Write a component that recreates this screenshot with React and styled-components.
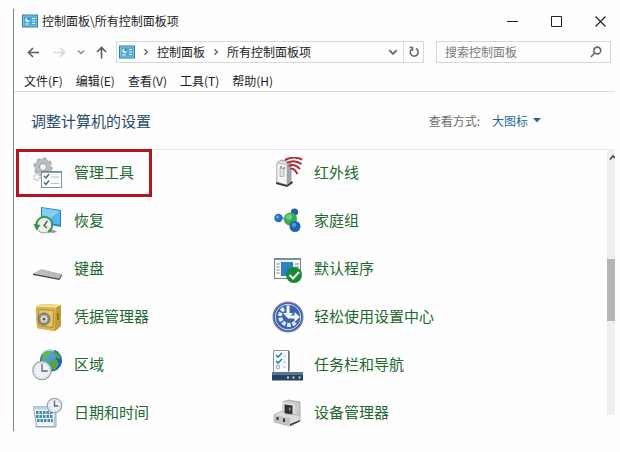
import styled, { createGlobalStyle } from 'styled-components'

const GlobalStyle = createGlobalStyle`
  * {
    box-sizing: border-box;
  }

  body {
    margin: 0;
    background-color: #fefefe;
    color: #1c1c1c;
    font-family: "Noto Sans CJK SC", "Open Sans", sans-serif;
    font-size: 12px;
    line-height: 16px;
  }

  button, input, select {
    font: inherit;
    color: inherit;
    border: none;
    background: none;
    padding: 0;
    margin: 0;
  }

  a {
    color: inherit;
    text-decoration: none;
  }

  svg {
    display: block;
    flex: none;
  }
`

const PageStyled = styled.div`
  display: flex;
  height: 100vh;
  padding: 9px 5px 21px 13px;
`

const WindowStyled = styled.div`
  flex: 1;
  min-width: 0;
  display: flex;
  flex-direction: column;
  border-left: 1px solid #6f8c96;
`

const TitleBar = styled.header`
  flex: none;
  display: flex;
  align-items: center;
  gap: 4px;
  height: 24px;
  padding-left: 8px;

  h1 {
    flex: 1;
    margin: 0;
    font-size: 12px;
    font-weight: 400;
  }
`

const WindowButtons = styled.div`
  display: flex;
  gap: 14px;
`

const IconButton = styled.button`
  display: flex;
  align-items: center;
  justify-content: center;
  width: ${(props) => props.$width}px;
  height: 20px;
`

const Toolbar = styled.div`
  flex: none;
  display: flex;
  align-items: center;
  height: 38px;
  padding: 0 4px 0 8px;
`

const History = styled.div`
  display: flex;
  width: 94px;
  justify-content: space-between;
  padding-right: 4px;
`

const AddressBar = styled.nav`
  flex: 304 1 0;
  min-width: 0;
  display: flex;
  align-items: center;
  height: 22px;
  border: 1px solid #d6d9db;
  padding-left: 2px;

  a {
    white-space: nowrap;
  }

  .separator {
    margin: 0 7px;
  }

  .refresh {
    border-left: 1px solid #dcdcdc;
  }
`

const Spacer = styled.div`
  flex: 1;
`

const SearchBox = styled.form`
  flex: 161 1 0;
  min-width: 0;
  display: flex;
  align-items: center;
  height: 22px;
  margin-left: 12px;
  padding: 0 4px 0 8px;
  border: 1px solid #d6d6d6;

  input {
    flex: 1;
    min-width: 0;
    outline: none;
  }

  input::placeholder {
    color: #7a7a7a;
    opacity: 1;
  }
`

const MenuBar = styled.nav`
  flex: none;
  display: flex;
  align-items: center;
  gap: 13px;
  height: 21px;
  padding-left: 10px;
  border-bottom: 1px solid #dedede;
`

const SettingsHeader = styled.div`
  flex: none;
  display: flex;
  align-items: center;
  justify-content: space-between;
  height: 57px;
  padding: 0 74px 0 17px;

  h2 {
    margin: 0;
    font-size: 15px;
    font-weight: 400;
    color: #2c4b6c;
  }
`

const ViewMode = styled.div`
  display: flex;
  align-items: center;
  color: #6c6c6c;

  select {
    appearance: none;
    margin: 0 4px 0 12px;
    color: #1f6a9c;
  }
`

const Content = styled.main`
  flex: 1;
  min-height: 0;
  display: flex;
  box-shadow: inset 0 1px #e4e4e4;
`

const ItemGrid = styled.ul`
  flex: 1;
  display: grid;
  grid-template-columns: repeat(auto-fill, 240px);
  grid-auto-rows: 48px;
  margin: 0;
  padding: 0 0 0 2px;
  overflow: hidden;
  list-style: none;
`

const Item = styled.a`
  display: inline-flex;
  align-items: center;
  gap: 10px;
  height: 48px;
  padding: 0 15px 0 13px;
  border: 3px solid ${(props) => (props.$marked ? '#b3141f' : 'transparent')};
  color: #22682f;
  font-size: 15px;
  line-height: 20px;

  span {
    padding-bottom: 2px;
  }
`

const ScrollBar = styled.div`
  display: flex;
  flex-direction: column;
  align-items: flex-end;
  width: 8px;
  margin-bottom: 16px;
  background-color: #eeeeee;

  .arrow {
    padding-top: 5px;
    flex: 107;
  }

  .thumb {
    flex: 63;
    width: 8px;
    background-color: #b4b4b4;
  }

  .track {
    flex: 95;
  }
`

function PanelIcon() {
  return (
    <svg width="16" height="14" viewBox="0 0 16 14">
      <rect x="0.5" y="1" width="15" height="12" fill="#7cc5e6" stroke="#2f7fa5" />
      <rect x="2" y="2.5" width="12" height="9" fill="#4ca8d3" />
      <circle cx="5.5" cy="6" r="2.3" fill="#d9f2fb" />
      <path d="M5.500 6V3.700A2.300 2.300 0 0 1 7.800 6Z" fill="#236f9b" />
      <path d="M10 4.500h3M10 7h3M10 9.500h3M3 10h4" stroke="#e6f7fd" />
    </svg>
  )
}

function Chevron({ down, color = '#6b6b6b', size = 8 }) {
  return (
    <svg width={size} height={size} viewBox="0 0 8 8" fill="none" stroke={color} strokeWidth="1.5">
      <path d={down ? 'M1 2.500 4 5.500 7 2.500' : 'M2.500 1.200 5.300 4 2.500 6.800'} />
    </svg>
  )
}

function Arrow({ d, color }) {
  return (
    <svg width="13" height="13" viewBox="0 0 13 13" fill="none" stroke={color} strokeWidth="1.6">
      <path d={d} />
    </svg>
  )
}

function Clock({ cx, cy, r }) {
  return (
    <g>
      <circle cx={cx} cy={cy} r={r} fill="#eef2f6" stroke="#9aa7b4" strokeWidth="1.300" />
      <circle cx={cx} cy={cy} r={r - 2} fill="none" stroke="#b4bfca" strokeDasharray="1 2.500" />
      <path d={`M${cx} ${cy - r + 2.5}V${cy + 0.5}H${cx + r - 3.5}`} fill="none" stroke="#5a6a7c" strokeWidth="1.300" />
    </g>
  )
}

const drawings = {
  tools: (
    <>
      <circle cx="11" cy="10" r="6" fill="none" stroke="#b9bec2" strokeWidth="5" />
      <circle cx="11" cy="10" r="8.500" fill="none" stroke="#aeb4b9" strokeWidth="2.500" strokeDasharray="3.300 3.375" />
      <circle cx="11" cy="10" r="3.500" fill="#fafafa" stroke="#8f979d" />
      <circle cx="5" cy="20" r="3" fill="none" stroke="#c5cacd" strokeWidth="2" strokeDasharray="2 1" />
      <rect x="9.500" y="14.500" width="20" height="16" fill="#fbfcfd" stroke="#8493a0" />
      <path d="M9 15h21" stroke="#6f8190" strokeWidth="1.500" />
      <path d="m12 19 2 2 3-4M12 25.500l2 2 3-4" fill="none" stroke="#4a6480" strokeWidth="1.400" />
      <path d="M19 20h8M19 26.500h8" stroke="#b3bec8" />
    </>
  ),
  recovery: (
    <>
      <path d="M9 2 29 5v17L9 18Z" fill="#2b7fc0" />
      <path d="m10 3 18 3v14L10 16.500Z" fill="#5ab6ea" />
      <path d="m10 3 18 3-15 11-3-.5Z" fill="#84cef3" />
      <path d="m17 24 8 2-3 2-8-1Z" fill="#8a9aa5" />
      <circle cx="12" cy="20" r="8" fill="#e9efea" stroke="#8da494" />
      <path d="M5 23A8 8 0 1 1 16 27" fill="none" stroke="#3b9653" strokeWidth="2" />
      <path d="m1.500 19 7 1-4 5.500Z" fill="#2f9149" />
      <path d="M15.500 16 12 20.500l3 2.500" fill="none" stroke="#475b4f" strokeWidth="1.300" />
    </>
  ),
  keyboard: (
    <>
      <path d="M1 20.500 9 16l21 5-2 5Z" fill="#c4c7ca" />
      <path d="m1 20.500 26 5 3-4.500v1.500L27.500 27 1 22Z" fill="#45484c" />
      <path d="m5 19.500 22 4.500M7 18l21 4.500M9 17l19 4.500" stroke="#a6a9ac" strokeWidth="0.900" strokeDasharray="1.500 0.800" />
    </>
  ),
  safe: (
    <>
      <path d="m4 6 6-3 19 1v21l-6 5L5 27Z" fill="#b58e2e" />
      <path d="m4 6 6-3 19 1-5 3Z" fill="#f4dd8c" />
      <path d="m4 6 20 1-1 23-18-3Z" fill="#dcb650" />
      <path d="m24 7 5-3v21l-6 5Z" fill="#c39a37" />
      <path d="m6.500 8.500 15 1-.5 17-14-2Z" fill="#e6c86c" stroke="#a17c25" strokeWidth="0.800" />
      <circle cx="12" cy="18" r="6" fill="#99958b" stroke="#6f6a5e" />
      <circle cx="12" cy="18" r="4" fill="#dcdbd8" stroke="#5d594f" strokeDasharray="1.500 1.200" />
      <circle cx="12" cy="18" r="1.500" fill="#605d57" />
      <path d="M26 12v7" stroke="#866718" strokeWidth="1.500" />
    </>
  ),
  region: (
    <>
      <circle cx="19" cy="11.500" r="11" fill="#2261b5" />
      <circle cx="17" cy="8" r="7" fill="#4d9be1" />
      <path d="M10 7c2-4 6-6 9-6 2 2 0 3-1 4l-2 4-4 1-1 4-2-1Z" fill="#65b44a" />
      <path d="M21 2c4 1 7 4 8 7l-3 1-3-3ZM19 10l6 1 2 4-4 6-4-1-1-6Z" fill="#54a541" />
      <path d="M10 4c3-3 8-4 12-2" fill="none" stroke="#bbe4f8" strokeWidth="1.500" />
      <Clock cx={10} cy={21.5} r={9.2} />
    </>
  ),
  date: (
    <>
      <path d="M1.500 9.500h22l-1 20h-18Z" fill="#f0f6f9" stroke="#92abb8" />
      <path d="M2 11h21" stroke="#b9d4df" strokeWidth="3" />
      <path d="M4 15.500h17M4 19.500h17M5 23.500h16" stroke="#3d8da8" strokeWidth="2.800" strokeDasharray="2.500 1" />
      <path d="M3 30h21V12" fill="none" stroke="#98a9b2" />
      <Clock cx={22.5} cy={8.5} r={7.2} />
    </>
  ),
  infrared: (
    <>
      <path d="m5 6 4-3 10 2v20l-4 3-10-3Z" fill="#d9dbdc" stroke="#8b8f92" strokeWidth="0.800" />
      <path d="m5 6 10 2v20l-10-3Z" fill="#f5f5f5" stroke="#aaa" strokeWidth="0.600" />
      <path d="m15 8 4-3v20l-4 3Z" fill="#9fa4a8" />
      <path d="M8 11.500h4v8H8Z" fill="#dfe1e2" stroke="#a0a3a5" strokeWidth="0.700" />
      <path d="M9 9v2M12 10v2" stroke="#555" />
      <path d="m4 25 11 3 5-4 1 2-6 4-11-3Z" fill="#3c3c3e" />
      <path d="M13 3Q22-1.500 30 2.500M15 6Q22 2 29.500 7M17 9Q22 6 28 12M18.500 12Q22 10.500 25.500 17" fill="none" stroke="#b52a30" strokeWidth="2" />
    </>
  ),
  homegroup: (
    <>
      <path d="m7 13 11 1 5 7M18 14l4-7" stroke="#83a9c3" strokeWidth="2" fill="none" />
      <circle cx="6.500" cy="13" r="4.200" fill="#2670b5" />
      <circle cx="5.500" cy="12" r="1.600" fill="#69a9dc" />
      <circle cx="22.500" cy="7" r="3.600" fill="#22609f" />
      <circle cx="18.500" cy="14" r="6.600" fill="#39ac50" />
      <circle cx="17" cy="12" r="3" fill="#71cc7c" />
      <circle cx="23" cy="21.500" r="5.500" fill="#1c66b0" />
      <circle cx="22" cy="20" r="2.200" fill="#5799d2" />
    </>
  ),
  programs: (
    <>
      <rect x="2.500" y="5.500" width="26" height="20" fill="#f6f8f9" stroke="#75828b" />
      <path d="M2 6h27" stroke="#76909d" strokeWidth="2" />
      <rect x="9" y="9" width="12" height="14" fill="#2c82c5" />
      <path d="M4.500 11h3M4.500 14h3M4.500 17h3M4.500 20h3M23 11h4M23 14h4" stroke="#7b8b95" />
      <circle cx="22" cy="22" r="8" fill="#178a33" />
      <path d="m17.500 22 3.500 3.500 6-6.500" fill="none" stroke="#fff" strokeWidth="2" />
    </>
  ),
  access: (
    <>
      <circle cx="16" cy="16" r="14.800" fill="#2c4d9a" stroke="#7386ad" strokeWidth="1.500" />
      <circle cx="16" cy="16" r="12.800" fill="#3b62b3" stroke="#dae2f3" />
      <path d="M12 7.500A9 9 0 1 0 24.500 20" fill="none" stroke="#e4ebf7" strokeWidth="4" strokeDasharray="3.600 1.600" />
      <path d="M14.500 4.500h3v7.500h3.500L16 17.500 11 12h3.500Z" fill="#f5f8fd" />
      <path d="M16 14.500h6.500V11l5.500 5-5.500 5v-3.500H16Z" fill="#f5f8fd" />
    </>
  ),
  taskbar: (
    <>
      <path d="M1.500 1.500h15v22h-15Z" fill="#f7f9fa" stroke="#8c979f" />
      <path d="M17 2v20" stroke="#5f7078" strokeWidth="1.500" />
      <path d="m4 6 2 2 4-4M4 12l2 2 4-4" fill="none" stroke="#2f83b5" strokeWidth="1.700" />
      <path d="M4.500 16.500h3v3h-3Z" fill="none" stroke="#9db1bd" />
      <path d="M11 7h3M11 13h3M11 18h3" stroke="#b2bec6" />
      <rect x="0" y="23" width="31" height="8.500" fill="#2a425f" />
      <rect x="0" y="23" width="31" height="3" fill="#587596" />
      <path d="M15 28.500h2M20.500 28.500h2M26.500 28.500h2" stroke="#c5d2df" strokeWidth="2" />
    </>
  ),
  device: (
    <>
      <path d="m11 5 5-2 12 2v14l-5 5-12-3Z" fill="#c9cbcc" stroke="#8d9091" strokeWidth="0.700" />
      <path d="m11 5 12 2v14l-12-2Z" fill="#dcdddd" />
      <path d="m12.500 7.500 8 1v9l-8-1Z" fill="#303234" />
      <path d="m17 10 2 2-2 2Z" fill="#9ba0a3" />
      <path d="m2 18 8-4 4 3 14 1v6l-10 5-16-4Z" fill="#dadbdc" stroke="#999c9e" strokeWidth="0.700" />
      <path d="m2 18 16 3v8L2 25Z" fill="#bfc1c3" />
      <path d="m18 27 10-4v1.500L18 29Z" fill="#3e4042" />
      <path d="M5.500 20v3M12 21.500v3.500" stroke="#333" strokeWidth="2" />
    </>
  ),
}

const items = [
  { icon: 'tools', label: '管理工具', marked: true },
  { icon: 'infrared', label: '红外线' },
  { icon: 'recovery', label: '恢复' },
  { icon: 'homegroup', label: '家庭组' },
  { icon: 'keyboard', label: '键盘' },
  { icon: 'programs', label: '默认程序' },
  { icon: 'safe', label: '凭据管理器' },
  { icon: 'access', label: '轻松使用设置中心' },
  { icon: 'region', label: '区域' },
  { icon: 'taskbar', label: '任务栏和导航' },
  { icon: 'date', label: '日期和时间' },
  { icon: 'device', label: '设备管理器' },
]

const menus = ['文件(F)', '编辑(E)', '查看(V)', '工具(T)', '帮助(H)']

function App() {
  return (
    <PageStyled>
      <GlobalStyle />
      <WindowStyled>
        <TitleBar>
          <PanelIcon />
          <h1>控制面板\所有控制面板项</h1>
          <WindowButtons>
            <IconButton $width={30} aria-label="最小化">
              <svg width="11" height="11" stroke="#222"><path d="M0 5.500h11" /></svg>
            </IconButton>
            <IconButton $width={30} aria-label="最大化">
              <svg width="11" height="11" stroke="#222" fill="none"><path d="M.5.500h10v10H.5Z" /></svg>
            </IconButton>
            <IconButton $width={30} aria-label="关闭">
              <svg width="11" height="11" stroke="#222"><path d="m.5.500 10 10M10.500.500l-10 10" strokeWidth="1.200" /></svg>
            </IconButton>
          </WindowButtons>
        </TitleBar>
        <Toolbar>
          <History>
            <IconButton $width={22} aria-label="后退"><Arrow d="M12 6.500H1.500M6 2 1.500 6.500 6 11" color="#5c5c5c" /></IconButton>
            <IconButton $width={22} aria-label="前进"><Arrow d="M1 6.500h10.500M7 2l4.500 4.500L7 11" color="#d6d6d6" /></IconButton>
            <IconButton $width={12} aria-label="最近位置"><Chevron down color="#8c8c8c" /></IconButton>
            <IconButton $width={20} aria-label="上移"><Arrow d="M6.500 12.500V1.500M2 6l4.500-4.500L11 6" color="#5c5c5c" /></IconButton>
          </History>
          <AddressBar>
            <PanelIcon />
            <span className="separator"><Chevron /></span>
            <a href="#panel">控制面板</a>
            <span className="separator"><Chevron /></span>
            <a href="#all">所有控制面板项</a>
            <Spacer />
            <IconButton $width={20} aria-label="展开"><Chevron down size={10} /></IconButton>
            <IconButton $width={20} className="refresh" aria-label="刷新">
              <svg width="12" height="12" viewBox="0 0 12 12" fill="none" stroke="#666" strokeWidth="1.500">
                <path d="M7.800 2.500A4 4 0 1 1 3.500 3.200M1.500 1.500h3v3.500" />
              </svg>
            </IconButton>
          </AddressBar>
          <SearchBox>
            <input type="search" placeholder="搜索控制面板" aria-label="搜索控制面板" />
            <IconButton $width={20} aria-label="搜索">
              <svg width="12" height="12" viewBox="0 0 12 12" fill="none" stroke="#666" strokeWidth="1.600">
                <circle cx="7.300" cy="4.500" r="3.400" />
                <path d="M4.900 7 .8 11" />
              </svg>
            </IconButton>
          </SearchBox>
        </Toolbar>
        <MenuBar>
          {menus.map((menu) => (
            <button key={menu}>{menu}</button>
          ))}
        </MenuBar>
        <SettingsHeader>
          <h2>调整计算机的设置</h2>
          <ViewMode>
            <label htmlFor="view">查看方式:</label>
            <select id="view" defaultValue="大图标">
              <option>类别</option>
              <option>大图标</option>
              <option>小图标</option>
            </select>
            <svg width="8" height="5"><path d="M0 0h8L4 4.500Z" fill="#2b6b93" /></svg>
          </ViewMode>
        </SettingsHeader>
        <Content>
          <ItemGrid>
            {items.map((item) => (
              <li key={item.icon}>
                <Item href={`#${item.icon}`} $marked={item.marked}>
                  <svg width="32" height="32" viewBox="0 0 32 32">{drawings[item.icon]}</svg>
                  <span>{item.label}</span>
                </Item>
              </li>
            ))}
          </ItemGrid>
          <ScrollBar>
            <div className="arrow">
              <svg width="6" height="6" fill="none" stroke="#444" strokeWidth="1.700"><path d="M1 5.500 4 2l2 2" /></svg>
            </div>
            <div className="thumb" />
            <div className="track" />
          </ScrollBar>
        </Content>
      </WindowStyled>
    </PageStyled>
  )
}

export default App
